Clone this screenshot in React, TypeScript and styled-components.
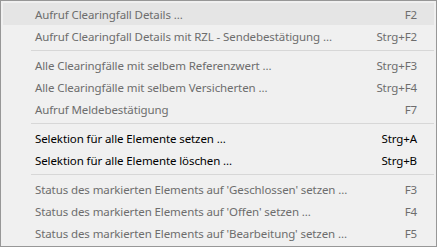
import React from "react";
import styled, { createGlobalStyle } from "styled-components";

const Global = createGlobalStyle`
  html, body { margin: 0; padding: 0; background: #f0f0f0; }
  body { font-family: "Noto Sans", "Open Sans", sans-serif; }
`;

const Menu = styled.div`
  width: 437px;
  height: 247px;
  box-sizing: border-box;
  border: 1px solid #979797;
  padding: 2px;
  background: #f0f0f0;
  display: flex;
  flex-direction: column;
`;

const Item = styled.div<{ $enabled?: boolean; $hover?: boolean }>`
  height: 22px;
  flex: none;
  display: flex;
  align-items: center;
  justify-content: space-between;
  padding: 0 17px 0 32px;
  font-size: 11.5px;
  letter-spacing: -0.1px;
  color: ${(p) => (p.$enabled ? "#000000" : "#6d6d6d")};
  background: ${(p) => (p.$hover ? "#e5e5e5" : "transparent")};
  white-space: nowrap;
`;

const Label = styled.span``;
const Shortcut = styled.span``;

const Separator = styled.div`
  height: 7px;
  flex: none;
  display: flex;
  align-items: center;
  padding-left: 28px;
  &::after {
    content: "";
    display: block;
    flex: 1;
    height: 1px;
    background: #d7d7d7;
  }
`;

type Entry =
  | { sep: true }
  | { label: string; key: string; enabled?: boolean; hover?: boolean };

const entries: Entry[] = [
  { label: "Aufruf Clearingfall Details ...", key: "F2", hover: true },
  { label: "Aufruf Clearingfall Details mit RZL - Sendebestätigung ...", key: "Strg+F2" },
  { sep: true },
  { label: "Alle Clearingfälle mit selbem Referenzwert ...", key: "Strg+F3" },
  { label: "Alle Clearingfälle mit selbem Versicherten ...", key: "Strg+F4" },
  { label: "Aufruf Meldebestätigung", key: "F7" },
  { sep: true },
  { label: "Selektion für alle Elemente setzen ...", key: "Strg+A", enabled: true },
  { label: "Selektion für alle Elemente löschen ...", key: "Strg+B", enabled: true },
  { sep: true },
  { label: "Status des markierten Elements auf 'Geschlossen' setzen ...", key: "F3" },
  { label: "Status des markierten Elements auf 'Offen' setzen ...", key: "F4" },
  { label: "Status des markierten Elements auf 'Bearbeitung' setzen ...", key: "F5" },
];

export default function App() {
  return (
    <>
      <Global />
      <Menu>
        {entries.map((e, i) =>
          "sep" in e ? (
            <Separator key={i} />
          ) : (
            <Item key={i} $enabled={e.enabled} $hover={e.hover}>
              <Label>{e.label}</Label>
              <Shortcut>{e.key}</Shortcut>
            </Item>
          )
        )}
      </Menu>
    </>
  );
}
